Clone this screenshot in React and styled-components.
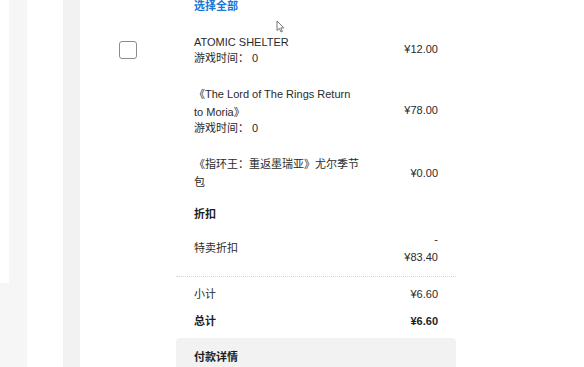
import React from 'react';
import styled, { createGlobalStyle } from 'styled-components';

const GlobalStyle = createGlobalStyle`
  html, body {
    margin: 0;
    padding: 0;
    background: #ffffff;
  }
  body {
    font-family: "Liberation Sans", "Noto Sans CJK SC", sans-serif;
    font-size: 11px;
    color: #2a2a2a;
    overflow: hidden;
  }
`;

const items = [
  { name: 'ATOMIC SHELTER', playtime: '0', price: '¥12.00' },
  { name: '《The Lord of The Rings Return to Moria》', playtime: '0', price: '¥78.00' },
  { name: '《指环王：重返墨瑞亚》尤尔季节包', price: '¥0.00' },
];

const Page = styled.div`
  display: flex;
  height: 367px;
  position: relative;
`;

const LeftPane = styled.div`
  width: 27px;
  flex-shrink: 0;
  background: #f6f6f6;
`;

const LeftCard = styled.div`
  width: 9px;
  height: 283px;
  background: #ffffff;
`;

const Spacer = styled.div`
  width: 36px;
  flex-shrink: 0;
`;

const Rail = styled.div`
  width: 17px;
  flex-shrink: 0;
  background: #f2f2f2;
`;

const Main = styled.div`
  flex: 1;
  display: flex;
  background: #fff;
`;

const CheckColumn = styled.div`
  width: 96px;
  flex-shrink: 0;
  padding: 41px 0 0 39px;
  box-sizing: border-box;
`;

const Checkbox = styled.div`
  width: 18px;
  height: 18px;
  box-sizing: border-box;
  border: 1.5px solid #8c8c8c;
  border-radius: 3px;
  background: #fff;
`;

const Summary = styled.div`
  width: 280px;
  flex-shrink: 0;
  display: flex;
  flex-direction: column;
`;

const Section = styled.div`
  padding: 0 18px;
  display: flex;
  flex-direction: column;
  margin-top: ${(p) => p.$top || 0}px;
`;

const SelectAll = styled.div`
  color: #2176d2;
  font-weight: bold;
  line-height: 16px;
  margin-top: -2px;
`;

const ItemList = styled.div`
  display: flex;
  flex-direction: column;
  gap: 20px;
  margin-top: 19px;
`;

const Row = styled.div`
  display: flex;
  justify-content: space-between;
  align-items: center;
`;

const NameCol = styled.div`
  width: 165px;
`;

const Name = styled.div`
  line-height: 18px;
`;

const Playtime = styled.div`
  line-height: 14px;
`;

const Price = styled.div`
  line-height: 18px;
  text-align: right;
  font-weight: ${(p) => (p.$bold ? 'bold' : 'normal')};
  color: ${(p) => (p.$bold ? '#1e1e1e' : '#2a2a2a')};
`;

const Heading = styled.div`
  line-height: 18px;
  font-weight: bold;
  color: #1e1e1e;
`;

const Label = styled.div`
  line-height: 18px;
  font-weight: ${(p) => (p.$bold ? 'bold' : 'normal')};
  color: ${(p) => (p.$bold ? '#1e1e1e' : '#2a2a2a')};
`;

const Divider = styled.div`
  margin-top: 10px;
  border-top: 1px dotted #d6d6d6;
`;

const PayBox = styled.div`
  margin-top: 8px;
  background: #f2f2f2;
  border-radius: 4px 4px 0 0;
  padding: 10px 18px 0;
  flex: 1;
`;

const Cursor = styled.svg`
  position: absolute;
  left: 276px;
  top: 20px;
`;

export default function App() {
  return (
    <>
      <GlobalStyle />
      <Page>
        <LeftPane>
          <LeftCard />
        </LeftPane>
        <Spacer />
        <Rail />
        <Main>
          <CheckColumn>
            <Checkbox />
          </CheckColumn>
          <Summary>
            <Section>
              <SelectAll>选择全部</SelectAll>
              <ItemList>
                {items.map((item, i) => (
                  <Row key={i}>
                    <NameCol>
                      <Name>{item.name}</Name>
                      {item.playtime && <Playtime>游戏时间： {item.playtime}</Playtime>}
                    </NameCol>
                    <Price>{item.price}</Price>
                  </Row>
                ))}
              </ItemList>
            </Section>
            <Section $top={14}>
              <Heading>折扣</Heading>
            </Section>
            <Section $top={7}>
              <Row>
                <Label>特卖折扣</Label>
                <Price>
                  -
                  <br />
                  ¥83.40
                </Price>
              </Row>
            </Section>
            <Divider />
            <Section $top={8}>
              <Row>
                <Label>小计</Label>
                <Price>¥6.60</Price>
              </Row>
            </Section>
            <Section $top={9}>
              <Row>
                <Label $bold>总计</Label>
                <Price $bold>¥6.60</Price>
              </Row>
            </Section>
            <PayBox>
              <Heading>付款详情</Heading>
            </PayBox>
          </Summary>
        </Main>
        <Cursor width="9" height="13" viewBox="0 0 9 13">
          <path d="M1 1 L1 10.5 L3.3 8.4 L5 12 L6.4 11.4 L4.8 7.9 L7.8 7.9 Z" fill="#fff" stroke="#666" strokeWidth="0.9" strokeLinejoin="round" />
        </Cursor>
      </Page>
    </>
  );
}
